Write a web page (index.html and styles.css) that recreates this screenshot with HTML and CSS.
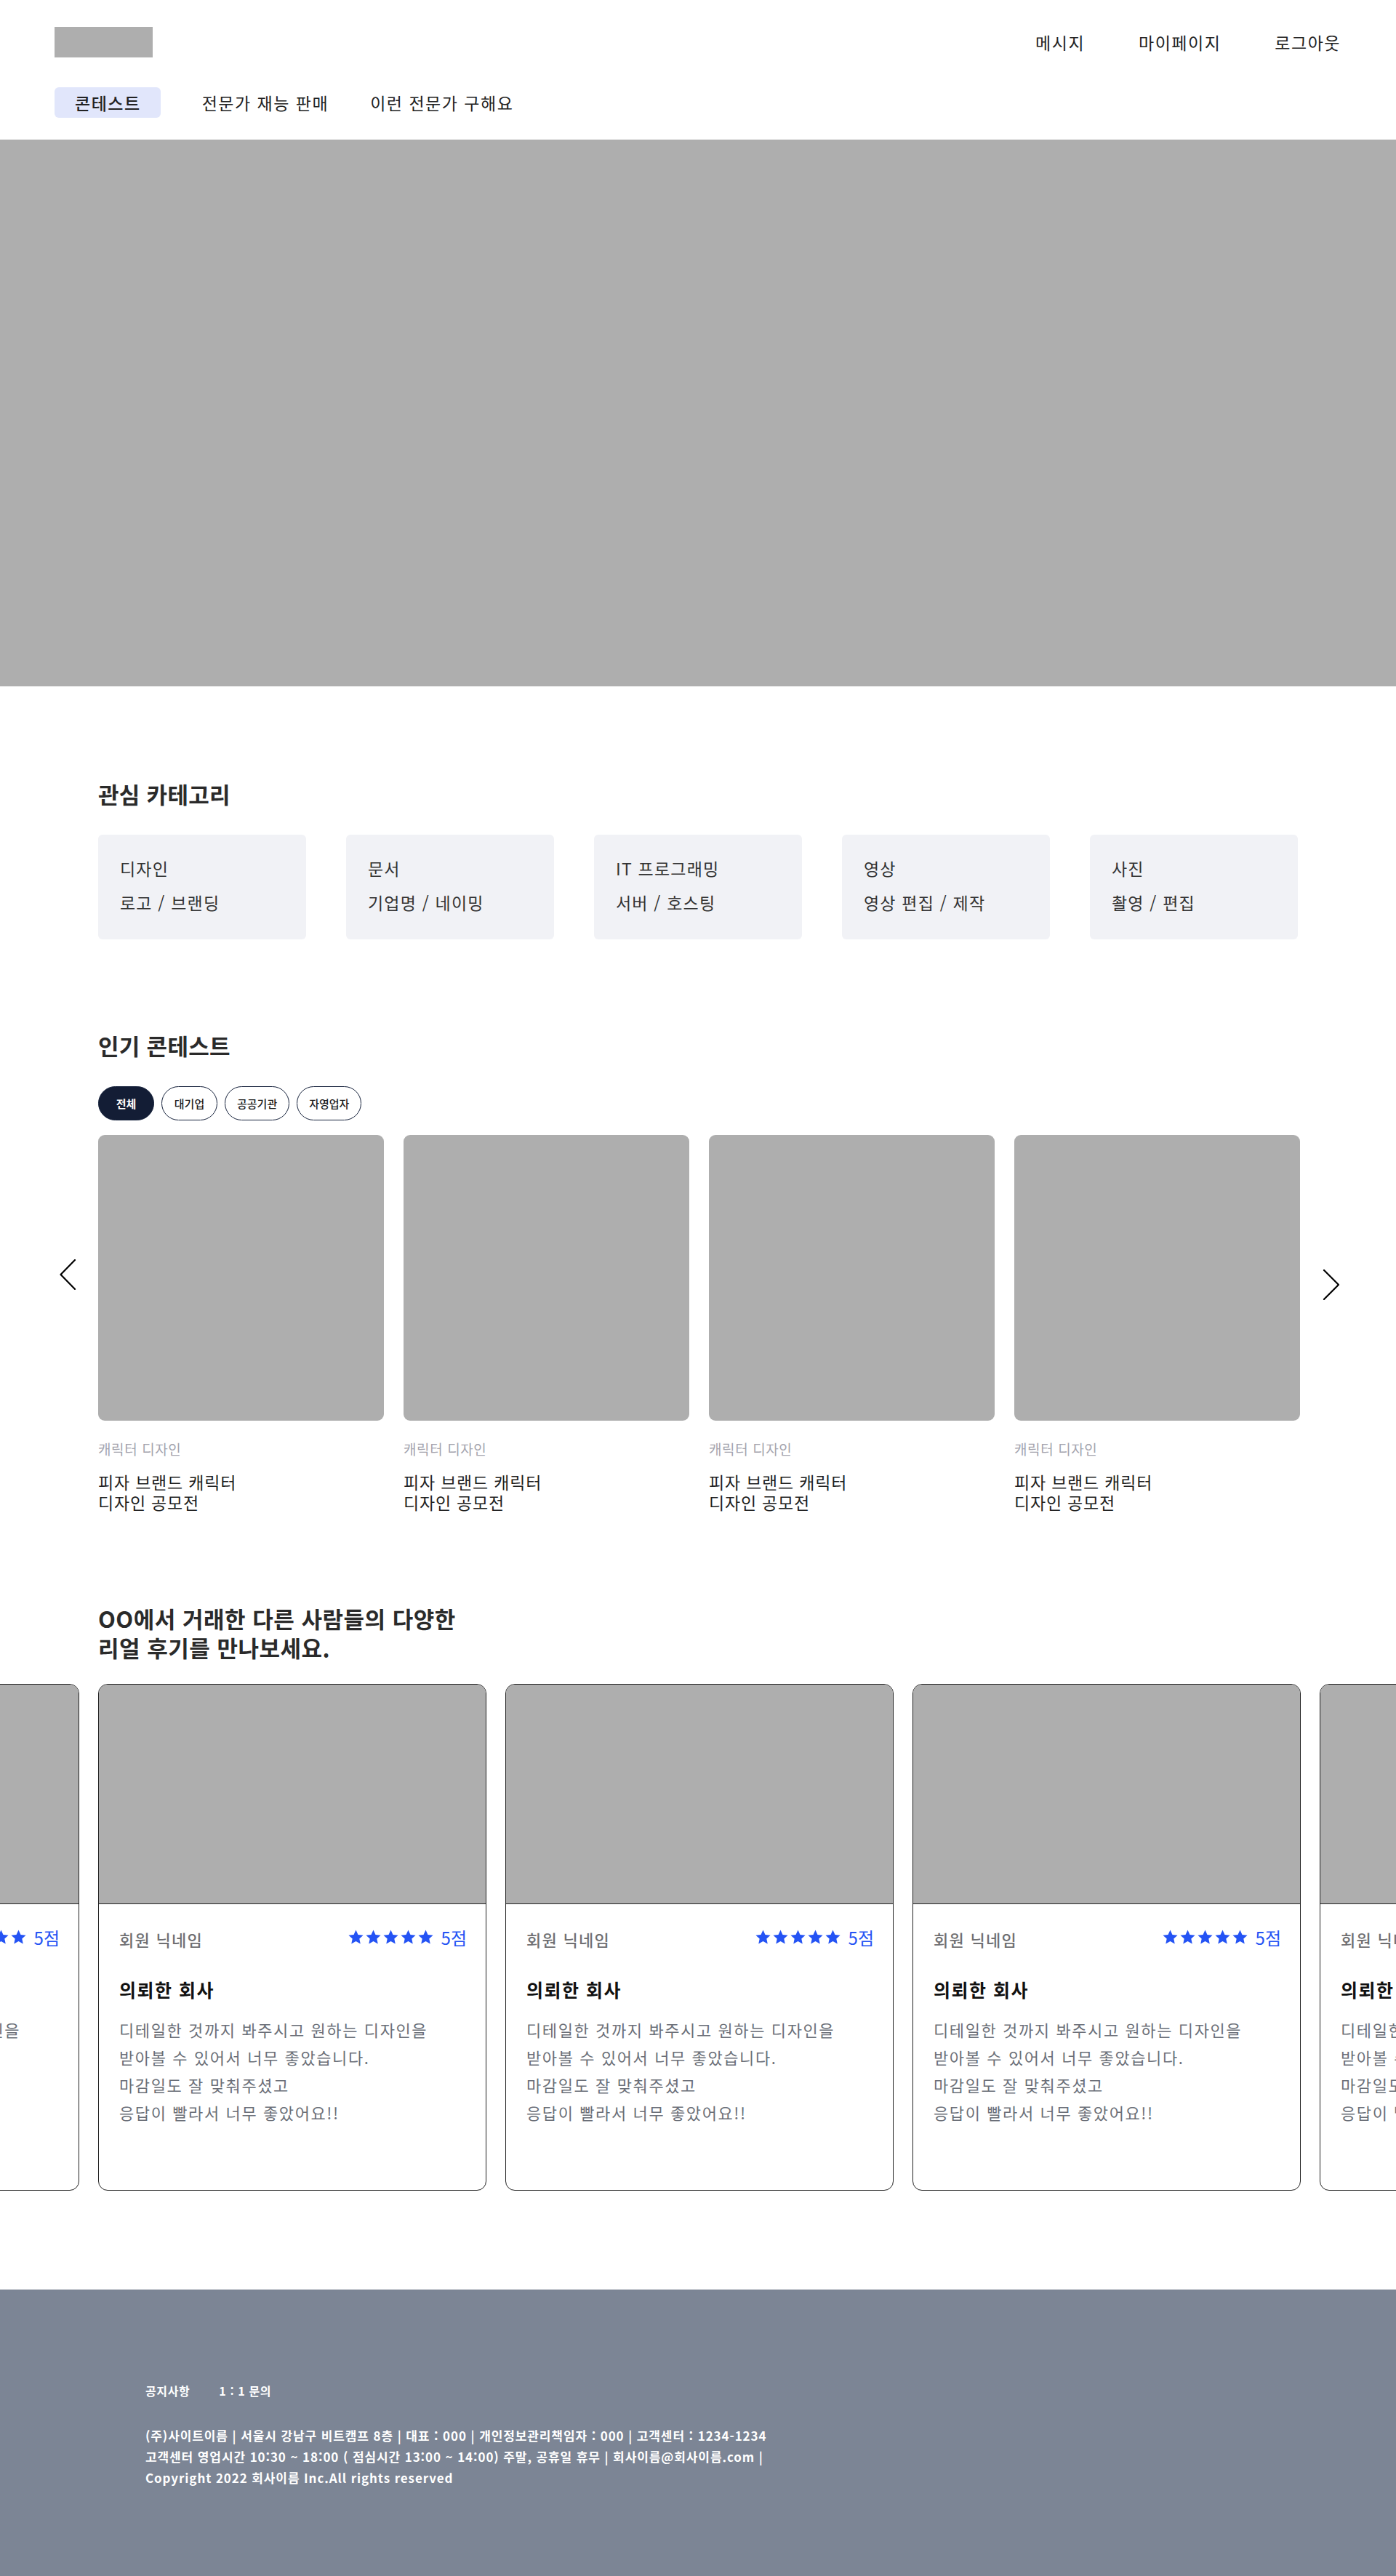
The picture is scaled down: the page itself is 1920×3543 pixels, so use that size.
FILE: index.html
```html
<!DOCTYPE html>
<html lang="ko">
<head>
<meta charset="utf-8">
<title>콘테스트</title>
<link rel="stylesheet" href="styles.css">
</head>
<body>
<header class="site-header">
  <div class="topbar">
    <div class="logo"></div>
    <nav class="user-nav">
      <a href="#">메시지</a>
      <a href="#">마이페이지</a>
      <a href="#">로그아웃</a>
    </nav>
  </div>
  <nav class="main-nav">
    <a href="#" class="active">콘테스트</a>
    <a href="#">전문가 재능 판매</a>
    <a href="#">이런 전문가 구해요</a>
  </nav>
</header>

<section class="hero"></section>

<main class="container">
  <section class="categories">
    <h2 class="section-title">관심 카테고리</h2>
    <div class="category-list">
      <div class="category-card"><p class="cat-name">디자인</p><p class="cat-sub">로고 / 브랜딩</p></div>
      <div class="category-card"><p class="cat-name">문서</p><p class="cat-sub">기업명 / 네이밍</p></div>
      <div class="category-card"><p class="cat-name">IT 프로그래밍</p><p class="cat-sub">서버 / 호스팅</p></div>
      <div class="category-card"><p class="cat-name">영상</p><p class="cat-sub">영상 편집 / 제작</p></div>
      <div class="category-card"><p class="cat-name">사진</p><p class="cat-sub">촬영 / 편집</p></div>
    </div>
  </section>

  <section class="contests">
    <h2 class="section-title">인기 콘테스트</h2>
    <div class="chips">
      <button class="chip active">전체</button>
      <button class="chip">대기업</button>
      <button class="chip">공공기관</button>
      <button class="chip">자영업자</button>
    </div>
    <div class="slider">
      <button class="arrow prev" aria-label="이전">
        <svg width="24" height="42" viewBox="0 0 24 42"><polyline points="22,1 2.5,21 22,41" fill="none" stroke="#000" stroke-width="2.2" stroke-linejoin="round" stroke-linecap="round"/></svg>
      </button>
      <div class="contest-list">
        <article class="contest-card">
          <div class="contest-thumb"></div>
          <p class="contest-cat">캐릭터 디자인</p>
          <p class="contest-title">피자 브랜드 캐릭터<br>디자인 공모전</p>
        </article>
        <article class="contest-card">
          <div class="contest-thumb"></div>
          <p class="contest-cat">캐릭터 디자인</p>
          <p class="contest-title">피자 브랜드 캐릭터<br>디자인 공모전</p>
        </article>
        <article class="contest-card">
          <div class="contest-thumb"></div>
          <p class="contest-cat">캐릭터 디자인</p>
          <p class="contest-title">피자 브랜드 캐릭터<br>디자인 공모전</p>
        </article>
        <article class="contest-card">
          <div class="contest-thumb"></div>
          <p class="contest-cat">캐릭터 디자인</p>
          <p class="contest-title">피자 브랜드 캐릭터<br>디자인 공모전</p>
        </article>
      </div>
      <button class="arrow next" aria-label="다음">
        <svg width="24" height="42" viewBox="0 0 24 42"><polyline points="2,1 22,21 2,41" fill="none" stroke="#000" stroke-width="2.2" stroke-linejoin="round" stroke-linecap="round"/></svg>
      </button>
    </div>
  </section>

  <section class="reviews-head">
    <h2 class="section-title review-title">OO에서 거래한 다른 사람들의 다양한<br>리얼 후기를 만나보세요.</h2>
  </section>
</main>

<div class="review-viewport">
  <div class="review-track">
    <article class="review-card">
      <div class="review-thumb"></div>
      <div class="review-body">
        <div class="review-meta">
          <span class="review-name">회원 닉네임</span>
          <span class="rating">
            <span class="stars">
              <svg viewBox="0 0 24 24"><polygon points="12,1.5 15.1,8.3 22.5,9.1 17,14.1 18.5,21.5 12,17.8 5.5,21.5 7,14.1 1.5,9.1 8.9,8.3"/></svg>
              <svg viewBox="0 0 24 24"><polygon points="12,1.5 15.1,8.3 22.5,9.1 17,14.1 18.5,21.5 12,17.8 5.5,21.5 7,14.1 1.5,9.1 8.9,8.3"/></svg>
              <svg viewBox="0 0 24 24"><polygon points="12,1.5 15.1,8.3 22.5,9.1 17,14.1 18.5,21.5 12,17.8 5.5,21.5 7,14.1 1.5,9.1 8.9,8.3"/></svg>
              <svg viewBox="0 0 24 24"><polygon points="12,1.5 15.1,8.3 22.5,9.1 17,14.1 18.5,21.5 12,17.8 5.5,21.5 7,14.1 1.5,9.1 8.9,8.3"/></svg>
              <svg viewBox="0 0 24 24"><polygon points="12,1.5 15.1,8.3 22.5,9.1 17,14.1 18.5,21.5 12,17.8 5.5,21.5 7,14.1 1.5,9.1 8.9,8.3"/></svg>
            </span>
            <span class="score">5점</span>
          </span>
        </div>
        <h3 class="review-company">의뢰한 회사</h3>
        <p class="review-text">디테일한 것까지 봐주시고 원하는 디자인을<br>받아볼 수 있어서 너무 좋았습니다.<br>마감일도 잘 맞춰주셨고<br>응답이 빨라서 너무 좋았어요!!</p>
      </div>
    </article>
    <article class="review-card">
      <div class="review-thumb"></div>
      <div class="review-body">
        <div class="review-meta">
          <span class="review-name">회원 닉네임</span>
          <span class="rating">
            <span class="stars">
              <svg viewBox="0 0 24 24"><polygon points="12,1.5 15.1,8.3 22.5,9.1 17,14.1 18.5,21.5 12,17.8 5.5,21.5 7,14.1 1.5,9.1 8.9,8.3"/></svg>
              <svg viewBox="0 0 24 24"><polygon points="12,1.5 15.1,8.3 22.5,9.1 17,14.1 18.5,21.5 12,17.8 5.5,21.5 7,14.1 1.5,9.1 8.9,8.3"/></svg>
              <svg viewBox="0 0 24 24"><polygon points="12,1.5 15.1,8.3 22.5,9.1 17,14.1 18.5,21.5 12,17.8 5.5,21.5 7,14.1 1.5,9.1 8.9,8.3"/></svg>
              <svg viewBox="0 0 24 24"><polygon points="12,1.5 15.1,8.3 22.5,9.1 17,14.1 18.5,21.5 12,17.8 5.5,21.5 7,14.1 1.5,9.1 8.9,8.3"/></svg>
              <svg viewBox="0 0 24 24"><polygon points="12,1.5 15.1,8.3 22.5,9.1 17,14.1 18.5,21.5 12,17.8 5.5,21.5 7,14.1 1.5,9.1 8.9,8.3"/></svg>
            </span>
            <span class="score">5점</span>
          </span>
        </div>
        <h3 class="review-company">의뢰한 회사</h3>
        <p class="review-text">디테일한 것까지 봐주시고 원하는 디자인을<br>받아볼 수 있어서 너무 좋았습니다.<br>마감일도 잘 맞춰주셨고<br>응답이 빨라서 너무 좋았어요!!</p>
      </div>
    </article>
    <article class="review-card">
      <div class="review-thumb"></div>
      <div class="review-body">
        <div class="review-meta">
          <span class="review-name">회원 닉네임</span>
          <span class="rating">
            <span class="stars">
              <svg viewBox="0 0 24 24"><polygon points="12,1.5 15.1,8.3 22.5,9.1 17,14.1 18.5,21.5 12,17.8 5.5,21.5 7,14.1 1.5,9.1 8.9,8.3"/></svg>
              <svg viewBox="0 0 24 24"><polygon points="12,1.5 15.1,8.3 22.5,9.1 17,14.1 18.5,21.5 12,17.8 5.5,21.5 7,14.1 1.5,9.1 8.9,8.3"/></svg>
              <svg viewBox="0 0 24 24"><polygon points="12,1.5 15.1,8.3 22.5,9.1 17,14.1 18.5,21.5 12,17.8 5.5,21.5 7,14.1 1.5,9.1 8.9,8.3"/></svg>
              <svg viewBox="0 0 24 24"><polygon points="12,1.5 15.1,8.3 22.5,9.1 17,14.1 18.5,21.5 12,17.8 5.5,21.5 7,14.1 1.5,9.1 8.9,8.3"/></svg>
              <svg viewBox="0 0 24 24"><polygon points="12,1.5 15.1,8.3 22.5,9.1 17,14.1 18.5,21.5 12,17.8 5.5,21.5 7,14.1 1.5,9.1 8.9,8.3"/></svg>
            </span>
            <span class="score">5점</span>
          </span>
        </div>
        <h3 class="review-company">의뢰한 회사</h3>
        <p class="review-text">디테일한 것까지 봐주시고 원하는 디자인을<br>받아볼 수 있어서 너무 좋았습니다.<br>마감일도 잘 맞춰주셨고<br>응답이 빨라서 너무 좋았어요!!</p>
      </div>
    </article>
    <article class="review-card">
      <div class="review-thumb"></div>
      <div class="review-body">
        <div class="review-meta">
          <span class="review-name">회원 닉네임</span>
          <span class="rating">
            <span class="stars">
              <svg viewBox="0 0 24 24"><polygon points="12,1.5 15.1,8.3 22.5,9.1 17,14.1 18.5,21.5 12,17.8 5.5,21.5 7,14.1 1.5,9.1 8.9,8.3"/></svg>
              <svg viewBox="0 0 24 24"><polygon points="12,1.5 15.1,8.3 22.5,9.1 17,14.1 18.5,21.5 12,17.8 5.5,21.5 7,14.1 1.5,9.1 8.9,8.3"/></svg>
              <svg viewBox="0 0 24 24"><polygon points="12,1.5 15.1,8.3 22.5,9.1 17,14.1 18.5,21.5 12,17.8 5.5,21.5 7,14.1 1.5,9.1 8.9,8.3"/></svg>
              <svg viewBox="0 0 24 24"><polygon points="12,1.5 15.1,8.3 22.5,9.1 17,14.1 18.5,21.5 12,17.8 5.5,21.5 7,14.1 1.5,9.1 8.9,8.3"/></svg>
              <svg viewBox="0 0 24 24"><polygon points="12,1.5 15.1,8.3 22.5,9.1 17,14.1 18.5,21.5 12,17.8 5.5,21.5 7,14.1 1.5,9.1 8.9,8.3"/></svg>
            </span>
            <span class="score">5점</span>
          </span>
        </div>
        <h3 class="review-company">의뢰한 회사</h3>
        <p class="review-text">디테일한 것까지 봐주시고 원하는 디자인을<br>받아볼 수 있어서 너무 좋았습니다.<br>마감일도 잘 맞춰주셨고<br>응답이 빨라서 너무 좋았어요!!</p>
      </div>
    </article>
    <article class="review-card">
      <div class="review-thumb"></div>
      <div class="review-body">
        <div class="review-meta">
          <span class="review-name">회원 닉네임</span>
          <span class="rating">
            <span class="stars">
              <svg viewBox="0 0 24 24"><polygon points="12,1.5 15.1,8.3 22.5,9.1 17,14.1 18.5,21.5 12,17.8 5.5,21.5 7,14.1 1.5,9.1 8.9,8.3"/></svg>
              <svg viewBox="0 0 24 24"><polygon points="12,1.5 15.1,8.3 22.5,9.1 17,14.1 18.5,21.5 12,17.8 5.5,21.5 7,14.1 1.5,9.1 8.9,8.3"/></svg>
              <svg viewBox="0 0 24 24"><polygon points="12,1.5 15.1,8.3 22.5,9.1 17,14.1 18.5,21.5 12,17.8 5.5,21.5 7,14.1 1.5,9.1 8.9,8.3"/></svg>
              <svg viewBox="0 0 24 24"><polygon points="12,1.5 15.1,8.3 22.5,9.1 17,14.1 18.5,21.5 12,17.8 5.5,21.5 7,14.1 1.5,9.1 8.9,8.3"/></svg>
              <svg viewBox="0 0 24 24"><polygon points="12,1.5 15.1,8.3 22.5,9.1 17,14.1 18.5,21.5 12,17.8 5.5,21.5 7,14.1 1.5,9.1 8.9,8.3"/></svg>
            </span>
            <span class="score">5점</span>
          </span>
        </div>
        <h3 class="review-company">의뢰한 회사</h3>
        <p class="review-text">디테일한 것까지 봐주시고 원하는 디자인을<br>받아볼 수 있어서 너무 좋았습니다.<br>마감일도 잘 맞춰주셨고<br>응답이 빨라서 너무 좋았어요!!</p>
      </div>
    </article>
  </div>
</div>

<footer class="site-footer">
  <div class="footer-inner">
    <nav class="footer-links">
      <a href="#">공지사항</a>
      <a href="#">1 : 1 문의</a>
    </nav>
    <div class="footer-info">
      <p>(주)사이트이름 | 서울시 강남구 비트캠프 8층 | 대표 : 000 | 개인정보관리책임자 : 000 | 고객센터 : 1234-1234</p>
      <p>고객센터 영업시간 10:30 ~ 18:00 ( 점심시간 13:00 ~ 14:00) 주말, 공휴일 휴무 | 회사이름@회사이름.com |</p>
      <p>Copyright 2022 회사이름 Inc.All rights reserved</p>
    </div>
  </div>
</footer>
</body>
</html>
```

FILE: styles.css
```css
* {
  box-sizing: border-box;
}

html, body {
  margin: 0;
  padding: 0;
}

body {
  font-family: "Noto Sans CJK KR", "Noto Sans", sans-serif;
  color: #222;
  background: #fff;
  overflow-x: hidden;
}

a {
  color: inherit;
  text-decoration: none;
}

p, h2, h3 {
  margin: 0;
}

button {
  font-family: inherit;
  cursor: pointer;
}

/* ---------- header ---------- */
.site-header {
  padding: 37px 76px 30px 75px;
}

.topbar {
  display: flex;
  align-items: center;
  justify-content: space-between;
  height: 42px;
}

.logo {
  width: 135px;
  height: 42px;
  background: #aeaeae;
}

.user-nav {
  display: flex;
  gap: 74px;
  font-size: 23px;
  line-height: 32px;
  letter-spacing: 1.5px;
  color: #222;
}

.main-nav {
  display: flex;
  align-items: center;
  gap: 57px;
  margin-top: 41px;
  height: 42px;
  font-size: 23px;
  line-height: 32px;
  letter-spacing: 1.5px;
  color: #222;
}

.main-nav a.active {
  display: flex;
  align-items: center;
  height: 42px;
  padding: 0 27px 0 28px;
  border-radius: 6px;
  background: #e1e6fb;
  font-weight: 500;
}

/* ---------- hero ---------- */
.hero {
  height: 752px;
  background: #aeaeae;
}

/* ---------- main ---------- */
.container {
  padding: 0 135px;
}

.section-title {
  font-size: 31px;
  line-height: 39px;
  font-weight: 700;
  color: #2a2a2a;
  letter-spacing: 0.3px;
}

.categories {
  padding-top: 128px;
}

.category-list {
  display: flex;
  gap: 55px;
  margin-top: 37px;
}

.category-card {
  width: 286px;
  height: 144px;
  padding: 30px 20px 0 30px;
  border-radius: 6px;
  background: #f1f2f6;
  font-size: 23px;
  line-height: 32px;
  letter-spacing: 1.2px;
  color: #333;
}

.cat-sub {
  margin-top: 15px;
}

.contests {
  padding-top: 126px;
}

.chips {
  display: flex;
  gap: 10px;
  margin-top: 37px;
}

.chip {
  min-width: 77px;
  height: 47px;
  padding: 0 16px;
  border: 1.5px solid #14203a;
  border-radius: 24px;
  background: #fff;
  color: #1a1a1a;
  font-size: 15px;
  font-weight: 500;
}

.chip.active {
  background: #131d35;
  color: #fff;
  font-weight: 700;
}

.slider {
  position: relative;
  margin-top: 20px;
}

.contest-list {
  display: flex;
  gap: 27px;
}

.contest-card {
  width: 393px;
  flex-shrink: 0;
}

.contest-thumb {
  height: 393px;
  border-radius: 9px;
  background: #aeaeae;
}

.contest-cat {
  margin-top: 26px;
  font-size: 19px;
  line-height: 26px;
  letter-spacing: 0.6px;
  color: #a4a4ae;
}

.contest-title {
  margin-top: 18px;
  font-size: 23px;
  line-height: 28px;
  letter-spacing: 0.8px;
  color: #1f1f1f;
}

.arrow {
  position: absolute;
  padding: 0;
  border: 0;
  background: none;
  line-height: 0;
}

.arrow.prev {
  left: -54px;
  top: 171px;
}

.arrow.next {
  right: -58px;
  top: 185px;
}

/* ---------- reviews ---------- */
.reviews-head {
  padding-top: 126px;
}

.review-title {
  font-size: 31px;
  line-height: 40px;
  letter-spacing: 0.5px;
}

.review-viewport {
  width: 100%;
  overflow: hidden;
  margin-top: 30px;
}

.review-track {
  display: flex;
  gap: 26px;
  margin-left: -425px;
}

.review-card {
  width: 534px;
  height: 697px;
  flex-shrink: 0;
  border: 1px solid #222;
  border-radius: 13px;
  overflow: hidden;
  background: #fff;
}

.review-thumb {
  height: 302px;
  background: #aeaeae;
  border-bottom: 1px solid #222;
}

.review-body {
  padding: 32px 26px 0 28px;
}

.review-meta {
  display: flex;
  align-items: center;
  justify-content: space-between;
  height: 32px;
}

.review-name {
  font-size: 22px;
  font-weight: 500;
  color: #6f6f72;
  letter-spacing: 1.3px;
}

.rating {
  display: flex;
  align-items: center;
  margin-top: -6px;
}

.stars {
  display: flex;
  gap: 1px;
}

.stars svg {
  width: 23px;
  height: 23px;
  fill: #2453f4;
}

.score {
  margin-left: 10px;
  font-size: 24px;
  color: #2453f4;
}

.review-company {
  margin-top: 36px;
  font-size: 25px;
  line-height: 34px;
  font-weight: 700;
  color: #111;
  letter-spacing: 1.5px;
}

.review-text {
  margin-top: 19px;
  font-size: 22px;
  line-height: 38px;
  color: #6b6f78;
  letter-spacing: 1.6px;
}

/* ---------- footer ---------- */
.site-footer {
  margin-top: 136px;
  height: 394px;
  background: #7c8595;
  color: #fff;
}

.footer-inner {
  padding: 127px 0 0 200px;
}

.footer-links {
  display: flex;
  gap: 40px;
  font-size: 16px;
  line-height: 24px;
  font-weight: 700;
  letter-spacing: 0.6px;
}

.footer-info {
  margin-top: 35px;
  font-size: 17px;
  line-height: 29px;
  font-weight: 600;
  letter-spacing: 0.9px;
}
```
